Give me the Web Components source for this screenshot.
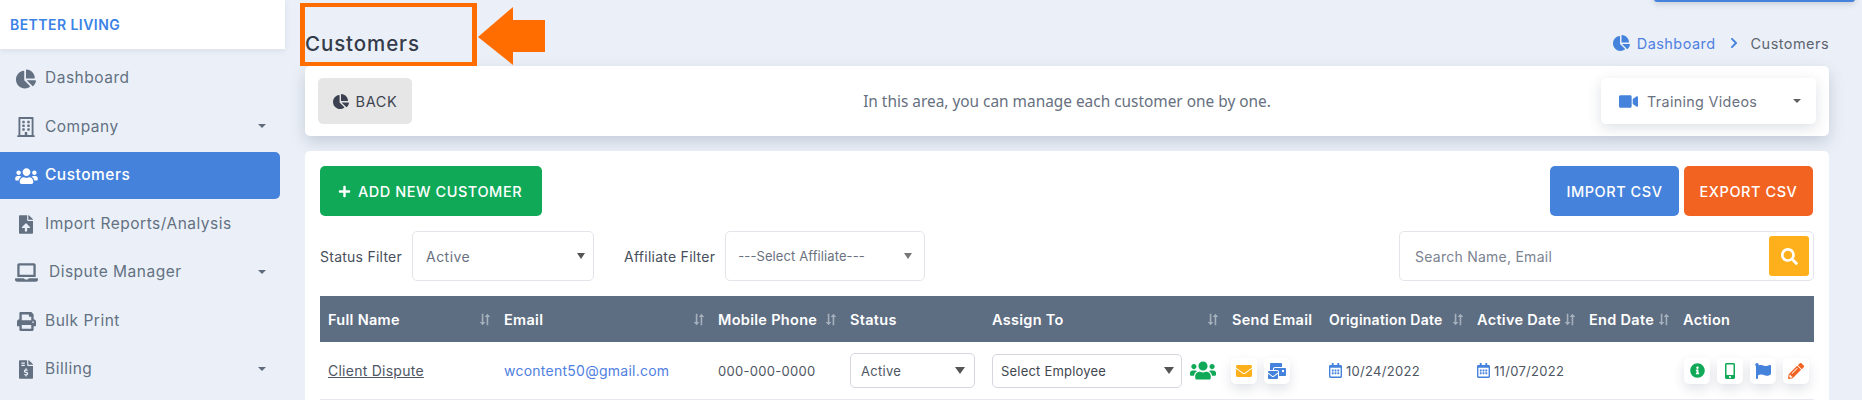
<!DOCTYPE html>
<html>
<head>
<meta charset="utf-8">
<title>Customers</title>
<style>
  html, body { margin: 0; height: 400px; overflow: hidden; background: #ebf0f8; }
  body { font-family: Inter, "Liberation Sans", sans-serif; color: #5f6b7c; }
</style>
</head>
<body>
<app-shell></app-shell>
<script>
const ICONS = {
  pie: ['0 0 544 512', 'M527.79 288H290.5l158.03 158.03c6.04 6.04 15.98 6.53 22.19.68 38.7-36.46 65.32-85.61 73.13-140.86 1.34-9.46-6.51-17.85-16.06-17.85zm-15.83-64.8C503.72 103.74 408.26 8.28 288.8.04 279.68-.59 272 7.1 272 16.24V240h223.77c9.14 0 16.82-7.68 16.19-16.8zM224 288V50.71c0-9.55-8.39-17.4-17.84-16.06C86.99 51.49-4.1 155.6.14 280.37 4.5 408.51 114.83 513.59 243.03 511.98c50.4-.63 96.97-16.87 135.26-44.03 7.9-5.6 8.42-17.23 1.57-24.08L224 288z'],
  users: ['0 0 640 512', 'M96 224c35.3 0 64-28.7 64-64s-28.7-64-64-64-64 28.7-64 64 28.7 64 64 64zm448 0c35.3 0 64-28.7 64-64s-28.7-64-64-64-64 28.7-64 64 28.7 64 64 64zm32 32h-64c-17.6 0-33.5 7.1-45.1 18.6 40.3 22.1 68.9 62 75.1 109.4h66c17.7 0 32-14.3 32-32v-32c0-35.3-28.7-64-64-64zm-256 0c61.9 0 112-50.1 112-112S381.9 32 320 32 208 82.1 208 144s50.1 112 112 112zm76.8 32h-8.3c-20.8 10-43.9 16-68.5 16s-47.6-6-68.5-16h-8.3C179.6 288 128 339.6 128 403.2V432c0 26.5 21.5 48 48 48h288c26.5 0 48-21.5 48-48v-28.8c0-63.6-51.6-115.2-115.2-115.2zm-223.7-13.4C161.5 263.1 145.6 256 128 256H64c-35.3 0-64 28.7-64 64v32c0 17.7 14.3 32 32 32h65.9c6.3-47.4 34.9-87.3 75.2-109.4z'],
  building: ['0 0 448 512', 'M128 148v-40c0-6.6 5.4-12 12-12h40c6.6 0 12 5.4 12 12v40c0 6.6-5.4 12-12 12h-40c-6.6 0-12-5.4-12-12zm140 12h40c6.6 0 12-5.4 12-12v-40c0-6.6-5.4-12-12-12h-40c-6.6 0-12 5.4-12 12v40c0 6.6 5.4 12 12 12zm-128 96h40c6.6 0 12-5.4 12-12v-40c0-6.6-5.4-12-12-12h-40c-6.6 0-12 5.4-12 12v40c0 6.6 5.4 12 12 12zm128 0h40c6.6 0 12-5.4 12-12v-40c0-6.6-5.4-12-12-12h-40c-6.6 0-12 5.4-12 12v40c0 6.6 5.4 12 12 12zm-76 84v-40c0-6.6-5.4-12-12-12h-40c-6.6 0-12 5.4-12 12v40c0 6.6 5.4 12 12 12h40c6.6 0 12-5.4 12-12zm76 12h40c6.6 0 12-5.4 12-12v-40c0-6.6-5.4-12-12-12h-40c-6.6 0-12 5.4-12 12v40c0 6.6 5.4 12 12 12zm180 124v36H0v-36c0-6.6 5.4-12 12-12h19.5V24c0-13.3 10.7-24 24-24h337c13.3 0 24 10.7 24 24v440H436c6.6 0 12 5.4 12 12zM79.5 463H192v-67c0-6.6 5.4-12 12-12h40c6.6 0 12 5.4 12 12v67h112.5V49L80 48l-.5 415z'],
  upload: ['0 0 384 512', 'M224 136V0H24C10.7 0 0 10.7 0 24v464c0 13.3 10.7 24 24 24h336c13.3 0 24-10.7 24-24V160H248c-13.2 0-24-10.8-24-24zm65.18 216.01H224v80c0 8.84-7.16 16-16 16h-32c-8.84 0-16-7.16-16-16v-80H94.82c-14.28 0-21.41-17.29-11.27-27.36l96.42-95.7c6.65-6.61 17.39-6.61 24.04 0l96.42 95.7c10.15 10.07 3.03 27.36-11.25 27.36zM377 105L279.1 7c-4.5-4.5-10.6-7-17-7H256v128h128v-6.1c0-6.3-2.5-12.4-7-16.9z'],
  laptop: ['0 0 640 512', 'M624 416H381.54c-.74 19.81-14.71 32-32.74 32H288c-18.69 0-33.02-17.47-32.77-32H16c-8.8 0-16 7.2-16 16v16c0 35.2 28.8 64 64 64h512c35.2 0 64-28.8 64-64v-16c0-8.8-7.2-16-16-16zM576 48c0-26.4-21.6-48-48-48H112C85.6 0 64 21.6 64 48v336h512V48zm-64 272H128V64h384v256z'],
  print: ['0 0 512 512', 'M448 192V77.25c0-8.49-3.37-16.62-9.37-22.63L393.37 9.37c-6-6-14.14-9.37-22.63-9.37H96C78.33 0 64 14.33 64 32v160c-35.35 0-64 28.65-64 64v112c0 8.84 7.16 16 16 16h48v96c0 17.67 14.33 32 32 32h320c17.67 0 32-14.33 32-32v-96h48c8.84 0 16-7.16 16-16V256c0-35.35-28.65-64-64-64zm-64 256H128v-96h256v96zm0-224H128V64h192v48c0 8.84 7.16 16 16 16h48v96zm48 72c-13.25 0-24-10.75-24-24 0-13.26 10.75-24 24-24s24 10.74 24 24c0 13.25-10.75 24-24 24z'],
  invoice: ['0 0 384 512', 'M377 105L279.1 7c-4.5-4.5-10.6-7-17-7H256v128h128v-6.1c0-6.3-2.5-12.4-7-16.9zM224 136V0H24C10.7 0 0 10.7 0 24v464c0 13.3 10.7 24 24 24h336c13.3 0 24-10.7 24-24V160H248c-13.2 0-24-10.8-24-24zM64 72c0-4.42 3.58-8 8-8h80c4.42 0 8 3.58 8 8v16c0 4.42-3.58 8-8 8H72c-4.42 0-8-3.58-8-8V72zm0 80v-16c0-4.42 3.58-8 8-8h80c4.42 0 8 3.58 8 8v16c0 4.42-3.58 8-8 8H72c-4.42 0-8-3.58-8-8zm144 263.88V440c0 4.42-3.58 8-8 8h-16c-4.42 0-8-3.58-8-8v-24.29c-11.29-.58-22.27-4.52-31.37-11.35-3.9-2.93-4.1-8.77-.57-12.14l11.75-11.21c2.77-2.64 6.89-2.76 10.13-.73 3.87 2.42 8.26 3.72 12.82 3.72h28.11c6.5 0 11.8-5.92 11.8-13.19 0-5.95-3.61-11.19-8.77-12.73l-45-13.5c-18.59-5.58-31.58-23.42-31.58-43.39 0-24.52 19.05-44.44 42.67-45.07V232c0-4.42 3.58-8 8-8h16c4.42 0 8 3.58 8 8v24.29c11.29.58 22.27 4.51 31.37 11.35 3.9 2.93 4.1 8.77.57 12.14l-11.75 11.21c-2.77 2.64-6.89 2.76-10.13.73-3.87-2.43-8.26-3.72-12.82-3.72h-28.11c-6.5 0-11.8 5.92-11.8 13.19 0 5.95 3.61 11.19 8.77 12.73l45 13.5c18.59 5.58 31.58 23.42 31.58 43.39 0 24.53-19.05 44.44-42.67 45.07z'],
  video: ['0 0 576 512', 'M336.2 64H47.8C21.4 64 0 85.4 0 111.8v288.4C0 426.6 21.4 448 47.8 448h288.4c26.4 0 47.8-21.4 47.8-47.8V111.8c0-26.4-21.4-47.8-47.8-47.8zm189.4 37.7L416 177.3v157.4l109.6 75.5c21.2 14.6 50.4-.3 50.4-25.8V127.5c0-25.4-29.1-40.4-50.4-25.8z'],
  search: ['0 0 512 512', 'M505 442.7L405.3 343c-4.5-4.5-10.6-7-17-7H372c27.6-35.3 44-79.7 44-128C416 93.1 322.9 0 208 0S0 93.1 0 208s93.1 208 208 208c48.3 0 92.7-16.4 128-44v16.3c0 6.4 2.5 12.5 7 17l99.7 99.7c9.4 9.4 24.6 9.4 33.9 0l28.3-28.3c9.4-9.4 9.4-24.6.1-34zM208 336c-70.7 0-128-57.2-128-128 0-70.7 57.2-128 128-128 70.7 0 128 57.2 128 128 0 70.7-57.2 128-128 128z'],
  plus: ['0 0 448 512', 'M416 208H272V64c0-17.67-14.33-32-32-32h-32c-17.67 0-32 14.33-32 32v144H32c-17.67 0-32 14.33-32 32v32c0 17.67 14.33 32 32 32h144v144c0 17.67 14.33 32 32 32h32c17.67 0 32-14.33 32-32V304h144c17.67 0 32-14.33 32-32v-32c0-17.67-14.33-32-32-32z'],
  envelope: ['0 0 512 512', 'M502.3 190.8c3.9-3.1 9.7-.2 9.7 4.7V400c0 26.5-21.5 48-48 48H48c-26.5 0-48-21.5-48-48V195.6c0-5 5.7-7.8 9.7-4.7 22.4 17.4 52.1 39.5 154.1 113.6 21.1 15.4 56.7 47.8 92.2 47.6 35.7.3 72-32.8 92.3-47.6 102-74.1 131.6-96.3 154-113.7zM256 320c23.2.4 56.6-29.2 73.4-41.4 132.7-96.3 142.8-104.7 173.4-128.7 5.8-4.5 9.2-11.5 9.2-18.9v-19c0-26.5-21.5-48-48-48H48C21.5 64 0 85.5 0 112v19c0 7.4 3.4 14.3 9.2 18.9 30.6 23.9 40.7 32.4 173.4 128.7 16.8 12.2 50.2 41.8 73.4 41.4z'],
  mailbulk: ['0 0 576 512', 'M160 448c-25.6 0-51.2-22.4-64-32-64-44.8-83.2-60.8-96-70.4V480c0 17.67 14.33 32 32 32h256c17.67 0 32-14.33 32-32V345.6c-12.8 9.6-32 25.6-96 70.4-12.8 9.6-38.4 32-64 32zm128-192H32c-17.67 0-32 14.33-32 32v16c25.6 19.2 22.4 19.2 115.2 86.4 9.6 6.4 28.8 25.6 44.8 25.6s35.2-19.2 44.8-22.4c92.8-67.2 89.6-67.2 115.2-86.4V288c0-17.67-14.33-32-32-32zm256-96H224c-17.67 0-32 14.33-32 32v32h96c33.21 0 60.59 25.42 63.71 57.82l.29-.22V416h192c17.67 0 32-14.33 32-32V192c0-17.67-14.33-32-32-32zm-32 128h-64v-64h64v64zm-352-96c0-35.29 28.71-64 64-64h224V32c0-17.67-14.33-32-32-32H96C78.33 0 64 14.33 64 32v192h96v-32z'],
  info: ['0 0 512 512', 'M256 8C119.043 8 8 119.083 8 256c0 136.997 111.043 248 248 248s248-111.003 248-248C504 119.083 392.957 8 256 8zm0 110c23.196 0 42 18.804 42 42s-18.804 42-42 42-42-18.804-42-42 18.804-42 42-42zm56 254c0 6.627-5.373 12-12 12h-88c-6.627 0-12-5.373-12-12v-24c0-6.627 5.373-12 12-12h12v-64h-12c-6.627 0-12-5.373-12-12v-24c0-6.627 5.373-12 12-12h64c6.627 0 12 5.373 12 12v100h12c6.627 0 12 5.373 12 12v24z'],
  mobile: ['0 0 320 512', 'M272 0H48C21.5 0 0 21.5 0 48v416c0 26.5 21.5 48 48 48h224c26.5 0 48-21.5 48-48V48c0-26.5-21.5-48-48-48zM160 480c-17.7 0-32-14.3-32-32s14.3-32 32-32 32 14.3 32 32-14.3 32-32 32zm112-108c0 6.6-5.4 12-12 12H60c-6.6 0-12-5.4-12-12V60c0-6.6 5.4-12 12-12h200c6.6 0 12 5.4 12 12v312z'],
  flag: ['0 0 512 512', 'M349.565 98.783C295.978 98.783 251.721 64 184.348 64c-24.955 0-47.309 4.384-68.045 12.013a55.947 55.947 0 0 0 3.586-23.562C118.117 24.015 94.806 1.206 66.338.048 34.345-1.254 8 24.296 8 56c0 19.026 9.497 35.825 24 45.945V488c0 13.255 10.745 24 24 24h16c13.255 0 24-10.745 24-24v-94.4c28.311-12.064 63.582-22.122 114.435-22.122 53.588 0 97.844 34.783 165.217 34.783 48.169 0 86.667-16.294 122.505-40.858C506.84 359.452 512 349.571 512 339.045v-243.1c0-23.393-24.269-38.87-45.485-29.016-34.338 15.948-76.454 31.854-116.95 31.854z'],
  pencil: ['0 0 512 512', 'M497.9 142.1l-46.1 46.1c-4.7 4.7-12.3 4.7-17 0l-111-111c-4.7-4.7-4.7-12.3 0-17l46.1-46.1c18.7-18.7 49.1-18.7 67.9 0l60.1 60.1c18.8 18.7 18.8 49.1 0 67.9zM284.2 99.8L21.6 362.4.4 483.9c-2.9 16.4 11.4 30.6 27.8 27.8l121.5-21.3 262.6-262.6c4.7-4.7 4.7-12.3 0-17l-111-111c-4.8-4.7-12.4-4.7-17.1 0zM124.1 339.9c-5.5-5.5-5.5-14.3 0-19.8l154-154c5.5-5.5 14.3-5.5 19.8 0s5.5 14.3 0 19.8l-154 154c-5.5 5.5-14.3 5.5-19.8 0zM88 424h48v36.3l-64.5 11.3-31.1-31.1L51.7 376H88v48z'],
  calendar: ['0 0 448 512', 'M148 288h-40c-6.6 0-12-5.4-12-12v-40c0-6.6 5.4-12 12-12h40c6.6 0 12 5.4 12 12v40c0 6.6-5.4 12-12 12zm108-12v-40c0-6.6-5.4-12-12-12h-40c-6.6 0-12 5.4-12 12v40c0 6.6 5.4 12 12 12h40c6.6 0 12-5.4 12-12zm96 0v-40c0-6.6-5.4-12-12-12h-40c-6.6 0-12 5.4-12 12v40c0 6.6 5.4 12 12 12h40c6.6 0 12-5.4 12-12zm-96 96v-40c0-6.6-5.4-12-12-12h-40c-6.6 0-12 5.4-12 12v40c0 6.6 5.4 12 12 12h40c6.6 0 12-5.4 12-12zm-96 0v-40c0-6.6-5.4-12-12-12h-40c-6.6 0-12 5.4-12 12v40c0 6.6 5.4 12 12 12h40c6.6 0 12-5.4 12-12zm192 0v-40c0-6.6-5.4-12-12-12h-40c-6.6 0-12 5.4-12 12v40c0 6.6 5.4 12 12 12h40c6.6 0 12-5.4 12-12zm96-260v352c0 26.5-21.5 48-48 48H48c-26.5 0-48-21.5-48-48V112c0-26.5 21.5-48 48-48h48V12c0-6.6 5.4-12 12-12h40c6.6 0 12 5.4 12 12v52h128V12c0-6.6 5.4-12 12-12h40c6.6 0 12 5.4 12 12v52h48c26.5 0 48 21.5 48 48zm-48 346V160H48v298c0 3.3 2.7 6 6 6h340c3.3 0 6-2.7 6-6z'],
  sort: ['0 0 14 16', 'M3 1h2v10h2.5L4 15 .5 11H3zM9 15h2V5h2.5L10 1 6.5 5H9z'],
  chevron: ['0 0 320 512', 'M285.5 273L91.1 467.3c-9.4 9.4-24.6 9.4-33.9 0l-22.7-22.7c-9.4-9.4-9.4-24.6 0-33.9L188.5 256 34.5 101.3c-9.3-9.4-9.3-24.5 0-33.9l22.7-22.7c9.4-9.4 24.6-9.4 33.9 0L285.5 239c9.4 9.4 9.4 24.6 0 34z']
};

const SANS = 'Inter, "Liberation Sans", sans-serif';

// one small svg from the table above, size and colour come from attributes
class AppIcon extends HTMLElement {
  connectedCallback() {
    const [box, d] = ICONS[this.getAttribute('name')];
    const w = this.getAttribute('w') || 16;
    const h = this.getAttribute('h') || w;
    const color = this.getAttribute('color') || 'currentColor';
    this.attachShadow({ mode: 'open' }).innerHTML = `
      <style>:host { display: inline-flex; flex: none; width: ${w}px; height: ${h}px; } svg { width: 100%; height: 100%; display: block; }</style>
      <svg viewBox="${box}" fill="${color}" preserveAspectRatio="xMidYMid meet"><path d="${d}"/></svg>`;
  }
}
customElements.define('app-icon', AppIcon);

class CaretDown extends HTMLElement {
  constructor() {
    super();
    this.attachShadow({ mode: 'open' }).innerHTML = `
      <style>:host { display: block; flex: none; width: 0; height: 0;
        border-left: var(--s, 4px) solid transparent; border-right: var(--s, 4px) solid transparent;
        border-top: calc(var(--s, 4px) * var(--r, 1.1)) solid var(--c, #5f6b7c); }</style>`;
  }
}
customElements.define('caret-down', CaretDown);

class NavItem extends HTMLElement {
  connectedCallback() {
    const caret = this.hasAttribute('caret');
    const iw = this.getAttribute('iw') || 20;
    const ih = this.getAttribute('ih') || iw;
    const gap = this.getAttribute('gap') || 8;
    this.attachShadow({ mode: 'open' }).innerHTML = `
      <style>
        :host { display: flex; align-items: center; height: 47px; margin-bottom: 1.5px; width: 280px;
          padding-left: 15px; box-sizing: border-box; border-radius: 0 5px 5px 0; font-size: 15.5px;
          letter-spacing: .5px; color: #637082; }
        :host([active]) { background: #4582db; color: #fff; font-weight: 500; }
        .ic { width: 22px; display: flex; justify-content: center; flex: none; }
        .label { margin: -2px 0 0 ${gap}px; }
        caret-down { margin-left: auto; margin-right: 14px; margin-top: -2px; }
      </style>
      <span class="ic"><app-icon name="${this.getAttribute('icon')}" w="${iw}" h="${ih}"></app-icon></span>
      <span class="label">${this.getAttribute('label')}</span>
      ${caret ? '<caret-down></caret-down>' : ''}`;
  }
}
customElements.define('nav-item', NavItem);

class SideBar extends HTMLElement {
  constructor() {
    super();
    this.attachShadow({ mode: 'open' }).innerHTML = `
      <style>
        :host { display: block; width: 285px; flex: none; }
        .logo { height: 49px; background: #fff; display: flex; align-items: center; padding-left: 10px;
          font-size: 14px; font-weight: 600; color: #3b82e6; letter-spacing: .45px;
          box-shadow: 0 2px 6px rgba(60,70,100,.1); }
        nav { padding-top: 6px; }
      </style>
      <div class="logo">BETTER LIVING</div>
      <nav>
        <nav-item icon="pie" label="Dashboard"></nav-item>
        <nav-item icon="building" label="Company" iw="18" ih="20" caret></nav-item>
        <nav-item icon="users" label="Customers" iw="23" ih="18" active></nav-item>
        <nav-item icon="upload" label="Import Reports/Analysis" iw="14" ih="19"></nav-item>
        <nav-item icon="laptop" label="Dispute Manager" iw="23" ih="19" gap="12" caret></nav-item>
        <nav-item icon="print" label="Bulk Print" iw="19" ih="19"></nav-item>
        <nav-item icon="invoice" label="Billing" iw="14" ih="19" caret></nav-item>
      </nav>`;
  }
}
customElements.define('side-bar', SideBar);

class PageHeader extends HTMLElement {
  constructor() {
    super();
    this.attachShadow({ mode: 'open' }).innerHTML = `
      <style>
        :host { display: flex; height: 66px; align-items: flex-end; justify-content: space-between; position: relative; }
        h1 { margin: 0 0 7px; font-size: 20.5px; line-height: 30px; font-weight: 500; color: #343b4a; letter-spacing: .9px; }
        .crumbs { display: flex; align-items: center; font-size: 14.5px; letter-spacing: .45px; height: 24px; margin-bottom: 11px; color: #5c6470; }
        .crumbs a { color: #4f7fe0; margin-left: 7px; }
        .crumbs app-icon.sep { margin: 0 13px 0 14px; }
        .box { position: absolute; left: -5px; top: 3px; width: 167px; height: 55px; border: solid #ff6d00; border-width: 4px 5px; }
        svg.arrow { position: absolute; left: 173px; top: 7px; }
      </style>
      <h1>Customers</h1>
      <div class="crumbs">
        <app-icon name="pie" w="17" h="16" color="#4582db"></app-icon>
        <a>Dashboard</a>
        <app-icon class="sep" name="chevron" w="8" h="12" color="#4582db"></app-icon>
        <span>Customers</span>
      </div>
      <div class="box"></div>
      <svg class="arrow" width="68" height="58" viewBox="0 0 68 58"><path fill="#ff6d00" d="M0 30 35 0V13H67V45H35V58z"/></svg>`;
  }
}
customElements.define('page-header', PageHeader);

class IntroCard extends HTMLElement {
  constructor() {
    super();
    this.attachShadow({ mode: 'open' }).innerHTML = `
      <style>
        :host { display: grid; grid-template-columns: 1fr auto 1fr; align-items: center; height: 70px; box-sizing: border-box;
          padding: 12px 13px; background: #fff; border-radius: 5px;
          box-shadow: 0 6px 16px rgba(50,60,90,.2); }
        .back { width: 94px; height: 46px; background: #e6e6e6; border-radius: 5px; display: flex; align-items: center;
          justify-content: center; gap: 7px; font-size: 14.5px; letter-spacing: .65px; color: #3d4450; }
        .msg { font-family: "Noto Sans", sans-serif; font-size: 15.4px; color: #667080; }
        .training { justify-self: end; width: 215px; height: 46px; box-sizing: border-box; background: #fff; border-radius: 5px;
          display: flex; align-items: center; padding: 0 15px 0 18px; font-size: 14.3px; color: #6a7280; letter-spacing: .35px;
          box-shadow: 0 4px 14px rgba(50,60,90,.16); }
        .training span { margin-left: 9px; }
        caret-down { margin-left: auto; --c: #606060; }
      </style>
      <div class="back"><app-icon name="pie" w="16" h="15" color="#3b4150"></app-icon>BACK</div>
      <div class="msg">In this area, you can manage each customer one by one.</div>
      <div class="training"><app-icon name="video" w="19" h="17" color="#4582db"></app-icon><span>Training Videos</span><caret-down></caret-down></div>`;
  }
}
customElements.define('intro-card', IntroCard);

class ActionBtn extends HTMLElement {
  constructor() {
    super();
    this.attachShadow({ mode: 'open' }).innerHTML = `
      <style>
        :host { display: inline-flex; align-items: center; justify-content: center; height: 50px; box-sizing: border-box;
          border-radius: 5px; color: #fff; font-size: 14.5px; font-weight: 500; letter-spacing: .55px; background: var(--bg); }
      </style><slot></slot>`;
  }
}
customElements.define('action-btn', ActionBtn);

class FilterSelect extends HTMLElement {
  connectedCallback() {
    this.attachShadow({ mode: 'open' }).innerHTML = `
      <style>
        :host { display: flex; align-items: center; box-sizing: border-box; background: #fff; color: var(--tc, #6a7280);
          height: var(--h, 50px); width: var(--w, 182px); padding: 0 var(--pr, 8px) 0 var(--pl, 13px);
          border: 1px solid var(--bc, #e3e5ea); border-radius: 5px; font-size: var(--fs, 14px); letter-spacing: var(--ls, .45px); }
        caret-down { margin-left: auto; --c: var(--ac, #555); --s: var(--as, 4.5px); --r: 1.5; }
      </style>
      <span>${this.getAttribute('value')}</span><caret-down></caret-down>`;
  }
}
customElements.define('filter-select', FilterSelect);

class SearchBox extends HTMLElement {
  constructor() {
    super();
    this.attachShadow({ mode: 'open' }).innerHTML = `
      <style>
        :host { display: flex; align-items: center; box-sizing: border-box; width: 415px; height: 50px; background: #fff;
          border: 1px solid #e3e5ea; border-radius: 5px; padding: 0 4px 0 15px; font-size: 14px; color: #7b8290; letter-spacing: .25px; }
        .go { margin-left: auto; width: 40px; height: 40px; border-radius: 3px; background: #fdb01c; display: flex;
          align-items: center; justify-content: center; }
      </style>
      <span>Search Name, Email</span>
      <div class="go"><app-icon name="search" w="17" color="#fff"></app-icon></div>`;
  }
}
customElements.define('search-box', SearchBox);

class HeadCell extends HTMLElement {
  connectedCallback() {
    this.attachShadow({ mode: 'open' }).innerHTML = `
      <style>
        :host { display: flex; align-items: center; justify-content: space-between; padding: 0 4px 0 9px; min-width: 0;
          color: #fff; font-size: 14.5px; font-weight: 600; letter-spacing: .3px; white-space: nowrap; }
      </style>
      <span><slot></slot></span>
      ${this.hasAttribute('sort') ? '<app-icon name="sort" w="12" h="13" color="#a6b0bd"></app-icon>' : ''}`;
  }
}
customElements.define('head-cell', HeadCell);

class TinyBtn extends HTMLElement {
  connectedCallback() {
    const w = this.getAttribute('w') || 16;
    const h = this.getAttribute('h') || w;
    this.attachShadow({ mode: 'open' }).innerHTML = `
      <style>
        :host { display: flex; width: 26px; height: 26px; flex: none; align-items: center; justify-content: center;
          background: #fff; border-radius: 5px; box-shadow: 0 5px 12px rgba(50,60,90,.14); }
      </style>
      <app-icon name="${this.getAttribute('icon')}" w="${w}" h="${h}" color="${this.getAttribute('color')}"></app-icon>`;
  }
}
customElements.define('tiny-btn', TinyBtn);

class BodyCell extends HTMLElement {
  constructor() {
    super();
    this.attachShadow({ mode: 'open' }).innerHTML = `
      <style>
        :host { display: flex; align-items: center; padding-left: 9px; gap: var(--gap, 0); min-width: 0; white-space: nowrap;
          font-size: 13px; letter-spacing: .3px; color: #4e5663; }
      </style><slot></slot>`;
  }
}
customElements.define('body-cell', BodyCell);

class CustomerTable extends HTMLElement {
  constructor() {
    super();
    const cols = '175px 214px 132px 142px 240px 97px 148px 112px 94px 140px';
    this.attachShadow({ mode: 'open' }).innerHTML = `
      <style>
        :host { display: block; }
        .head, .row { display: grid; grid-template-columns: ${cols}; }
        .head { height: 46px; background: #5d6d82; }
        .row { height: 57px; border-bottom: 1px solid #e6e9ef; box-sizing: content-box; }
        a { font-size: 14px; letter-spacing: .25px; }
        a.name { color: #4e5663; text-decoration: underline; }
        a.mail { color: #4f7fe0; }
        .small { --w: 125px; --h: 35px; --pl: 10px; --pr: 9px; --tc: #4e5663; --bc: #d3d6e0; --fs: 13px; --ls: .3px; --as: 5px; }
        .wide { --w: 190px; --h: 34px; --pl: 8px; --pr: 7px; --tc: #3f4650; --bc: #d3d6e0; --fs: 13px; --ls: .2px; --as: 5px; }
      </style>
      <div class="head">
        <head-cell sort style="padding-left: 8px">Full Name</head-cell>
        <head-cell sort>Email</head-cell>
        <head-cell sort>Mobile Phone</head-cell>
        <head-cell>Status</head-cell>
        <head-cell sort>Assign To</head-cell>
        <head-cell>Send Email</head-cell>
        <head-cell sort style="font-size: 14px; letter-spacing: .25px">Origination Date</head-cell>
        <head-cell sort>Active Date</head-cell>
        <head-cell sort>End Date</head-cell>
        <head-cell>Action</head-cell>
      </div>
      <div class="row">
        <body-cell style="padding-left: 8px"><a class="name">Client Dispute</a></body-cell>
        <body-cell><a class="mail">wcontent50@gmail.com</a></body-cell>
        <body-cell>000-000-0000</body-cell>
        <body-cell><filter-select class="small" value="Active"></filter-select></body-cell>
        <body-cell style="--gap: 8px">
          <filter-select class="wide" value="Select Employee"></filter-select>
          <app-icon name="users" w="26" h="21" color="#10a958"></app-icon>
        </body-cell>
        <body-cell style="--gap: 7px; padding-left: 8px">
          <tiny-btn icon="envelope" w="16" color="#fdb01c"></tiny-btn>
          <tiny-btn icon="mailbulk" w="18" color="#4582db"></tiny-btn>
        </body-cell>
        <body-cell style="--gap: 4px"><app-icon name="calendar" w="13" h="15" color="#4582db"></app-icon>10/24/2022</body-cell>
        <body-cell style="--gap: 4px"><app-icon name="calendar" w="13" h="15" color="#4582db"></app-icon>11/07/2022</body-cell>
        <body-cell></body-cell>
        <body-cell style="--gap: 7px; padding-left: 10px">
          <tiny-btn icon="info" w="15" color="#10a958"></tiny-btn>
          <tiny-btn icon="mobile" w="10" h="16" color="#10a958"></tiny-btn>
          <tiny-btn icon="flag" w="16" color="#4582db"></tiny-btn>
          <tiny-btn icon="pencil" w="16" color="#f26322"></tiny-btn>
        </body-cell>
      </div>`;
  }
}
customElements.define('customer-table', CustomerTable);

class CustomersCard extends HTMLElement {
  constructor() {
    super();
    this.attachShadow({ mode: 'open' }).innerHTML = `
      <style>
        :host { display: block; margin-top: 15px; padding: 15px 15px 0 15px; background: #fff; border-radius: 5px 5px 0 0; height: 249px; }
        .top { display: flex; }
        .add { width: 222px; gap: 7px; padding-right: 2px; }
        .right { margin-left: auto; margin-right: 1px; display: flex; gap: 5px; }
        .right action-btn { width: 129px; }
        .filters { display: flex; align-items: center; margin: 15px 0; font-size: 14px; letter-spacing: .25px; color: #474f5c; }
        .filters span { margin-right: 10px; }
        .aff { --w: 200px; --pl: 12px; --pr: 12px; --ac: #777; --as: 4px; --fs: 13px; --ls: .1px; margin-right: auto; }
        .status { margin-right: 30px; }
      </style>
      <div class="top">
        <action-btn class="add" style="--bg: #10a958"><app-icon name="plus" w="13" color="#fff"></app-icon>ADD NEW CUSTOMER</action-btn>
        <div class="right">
          <action-btn style="--bg: #4582db">IMPORT CSV</action-btn>
          <action-btn style="--bg: #f26322">EXPORT CSV</action-btn>
        </div>
      </div>
      <div class="filters">
        <span>Status Filter</span><filter-select class="status" value="Active"></filter-select>
        <span>Affiliate Filter</span><filter-select class="aff" value="---Select Affiliate---"></filter-select>
        <search-box></search-box>
      </div>
      <customer-table></customer-table>`;
  }
}
customElements.define('customers-card', CustomersCard);

class AppShell extends HTMLElement {
  constructor() {
    super();
    this.attachShadow({ mode: 'open' }).innerHTML = `
      <style>
        :host { display: flex; width: 1862px; height: 400px; overflow: hidden; position: relative; font-family: ${SANS}; }
        main { flex: 1; min-width: 0; padding: 0 33px 0 20px; }
        .peek { position: absolute; left: 1654px; top: -10px; width: 201px; height: 12px; background: #4582db; border-radius: 3px;
          box-shadow: 0 2px 6px rgba(50,60,90,.2); }
      </style>
      <side-bar></side-bar>
      <main>
        <page-header></page-header>
        <intro-card></intro-card>
        <customers-card></customers-card>
      </main>
      <div class="peek"></div>`;
  }
}
customElements.define('app-shell', AppShell);
</script>
</body>
</html>
